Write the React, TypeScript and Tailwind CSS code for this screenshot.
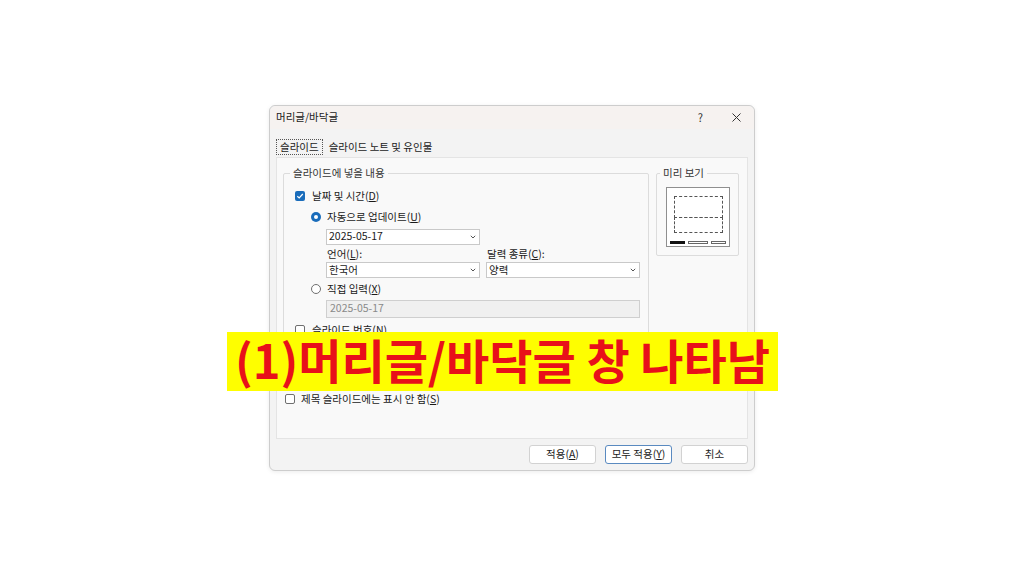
import React from 'react';

const font = { fontFamily: '"Noto Sans CJK KR", "Noto Sans", sans-serif' };

const U: React.FC<{ children: React.ReactNode }> = ({ children }) => (
  <span className="underline underline-offset-1">{children}</span>
);

const CheckBox: React.FC<{ checked?: boolean }> = ({ checked }) =>
  checked ? (
    <span className="w-[10px] h-[10px] rounded-[2px] bg-[#1a6dbb] flex items-center justify-center">
      <svg width="8" height="8" viewBox="0 0 8 8">
        <path d="M1.3 4.2 L3.2 6 L6.8 2" stroke="white" strokeWidth="1.2" fill="none" />
      </svg>
    </span>
  ) : (
    <span className="w-[10px] h-[10px] rounded-[2px] border border-[#6f6f6f] bg-white" />
  );

const Radio: React.FC<{ checked?: boolean }> = ({ checked }) =>
  checked ? (
    <span className="w-[10px] h-[10px] rounded-full bg-[#1a6dbb] flex items-center justify-center">
      <span className="w-[4px] h-[4px] rounded-full bg-white" />
    </span>
  ) : (
    <span className="w-[10px] h-[10px] rounded-full border border-[#707070] bg-white" />
  );

const Select: React.FC<{ value: string; width: string }> = ({ value, width }) => (
  <div className={`${width} h-[16px] bg-white border border-[#c9c9c9] flex items-center justify-between pl-[2px] pr-[3px]`}>
    <span className="text-[10.5px] text-[#1a1a1a] leading-none">{value}</span>
    <svg width="6" height="4" viewBox="0 0 6 4">
      <path d="M0.8 0.8 L3 3 L5.2 0.8" stroke="#555" strokeWidth="1" fill="none" />
    </svg>
  </div>
);

const Button: React.FC<{ children: React.ReactNode; primary?: boolean }> = ({ children, primary }) => (
  <button
    className={`w-[67px] h-[19px] rounded-[3px] bg-white text-[10.5px] text-[#1a1a1a] flex items-center justify-center leading-none ${
      primary ? 'border border-[#5a8ac0]' : 'border border-[#d2d2d2]'
    }`}
  >
    {children}
  </button>
);

export default function App() {
  return (
    <div className="w-[1024px] h-[576px] bg-white relative overflow-hidden" style={font}>
      <div className="pt-[105px] pl-[269px]">
        <div className="w-[486px] h-[366px] rounded-[6px] border border-[#cdcdcd] bg-[#f3f3f3] shadow-[0_1px_4px_rgba(0,0,0,0.08)] flex flex-col text-[#1a1a1a]">
          {/* title bar */}
          <div className="h-[23px] flex items-center pl-[6px] bg-[#f6f2f0] rounded-t-[6px]">
            <span className="text-[10.5px] leading-none">머리글/바닥글</span>
            <span className="ml-auto text-[11px] leading-none text-[#333] mr-[29px]">?</span>
            <svg width="9" height="9" viewBox="0 0 9 9" className="mr-[13px]">
              <path d="M0.5 0.5 L8.5 8.5 M8.5 0.5 L0.5 8.5" stroke="#333" strokeWidth="1" />
            </svg>
          </div>

          {/* tabs */}
          <div className="flex items-center pl-[6px] mt-[10px] h-[16px] text-[10.5px] leading-none">
            <span className="h-[16px] px-[3px] border border-dotted border-[#555] flex items-center">슬라이드</span>
            <span className="ml-[6px]">슬라이드 노트 및 유인물</span>
          </div>

          {/* panel */}
          <div className="mx-[6px] mt-[2px] h-[282px] bg-[#f9f9f9] border border-[#e4e4e4] px-[6px] pt-[10px] text-[10.5px] leading-none">
            <div className="flex gap-[7px]">
              <fieldset className="w-[366px] min-w-0 h-[218px] border border-[#dcdcdc] rounded-[2px] pl-[11px] pr-[8px] pt-[12px]">
                <legend className="px-[3px] -ml-[5px] text-[10.5px] text-[#333]">슬라이드에 넣을 내용</legend>
                <div className="flex items-center gap-[7px]">
                  <CheckBox checked />
                  <span>
                    날짜 및 시간(<U>D</U>)
                  </span>
                </div>
                <div className="pl-[16px] mt-[11px]">
                  <div className="flex items-center gap-[6px]">
                    <Radio checked />
                    <span>
                      자동으로 업데이트(<U>U</U>)
                    </span>
                  </div>
                  <div className="pl-[15px] mt-[6px]">
                    <Select value="2025-05-17" width="w-[154px]" />
                    <div className="flex gap-[6px] mt-[4px]">
                      <div className="flex flex-col gap-[3px]">
                        <span className="pl-[1px]">
                          언어(<U>L</U>):
                        </span>
                        <Select value="한국어" width="w-[154px]" />
                      </div>
                      <div className="flex flex-col gap-[3px]">
                        <span className="pl-[1px]">
                          달력 종류(<U>C</U>):
                        </span>
                        <Select value="양력" width="w-[154px]" />
                      </div>
                    </div>
                  </div>
                  <div className="flex items-center gap-[6px] mt-[6px]">
                    <Radio />
                    <span>
                      직접 입력(<U>X</U>)
                    </span>
                  </div>
                  <div className="pl-[15px] mt-[5px]">
                    <div className="w-[314px] h-[18px] bg-[#f0f0f0] border border-[#cfcfcf] flex items-center pl-[3px] text-[#8a8a8a]">
                      2025-05-17
                    </div>
                  </div>
                </div>
                <div className="flex items-center gap-[7px] mt-[7px]">
                  <CheckBox />
                  <span>
                    슬라이드 번호(<U>N</U>)
                  </span>
                </div>
                <div className="pl-[31px] mt-[26px]">
                  <div className="w-[300px] h-[18px] bg-white border border-[#cfcfcf]" />
                </div>
              </fieldset>

              <fieldset className="w-[83px] min-w-0 h-[88px] border border-[#dcdcdc] rounded-[2px] px-[9px] pt-[8px]">
                <legend className="px-[3px] -ml-[6px] text-[10.5px] text-[#333]">미리 보기</legend>
                <div className="w-[64px] h-[60px] bg-white border border-[#8f8f8f] flex flex-col items-center pt-[8px]">
                  <div className="w-[49px] h-[22px] border border-dashed border-[#555]" />
                  <div className="w-[49px] h-[16px] border border-dashed border-[#555] -mt-[1px]" />
                  <div className="flex gap-[3px] mt-[8px] self-start ml-[3px]">
                    <div className="w-[15px] h-[3px] bg-[#111]" />
                    <div className="w-[20px] h-[3px] border border-[#666]" />
                    <div className="w-[15px] h-[3px] border border-[#666]" />
                  </div>
                </div>
              </fieldset>
            </div>
            <div className="flex items-center gap-[6px] mt-[8px] pl-[2px]">
              <CheckBox />
              <span>
                제목 슬라이드에는 표시 안 함(<U>S</U>)
              </span>
            </div>
          </div>

          {/* buttons */}
          <div className="flex justify-end gap-[9px] mt-[6px] pr-[6px]">
            <Button>
              적용(<U>A</U>)
            </Button>
            <Button primary>
              모두 적용(<U>Y</U>)
            </Button>
            <Button>취소</Button>
          </div>
        </div>
      </div>

      {/* caption overlay */}
      <div className="absolute left-[227px] top-[332px] w-[551px] h-[59px] bg-[#fefe00] flex items-center justify-center pb-[6px]">
        <span className="text-[47px] font-bold text-[#e8101a] leading-none">(1)머리글/바닥글 창 나타남</span>
      </div>
    </div>
  );
}
